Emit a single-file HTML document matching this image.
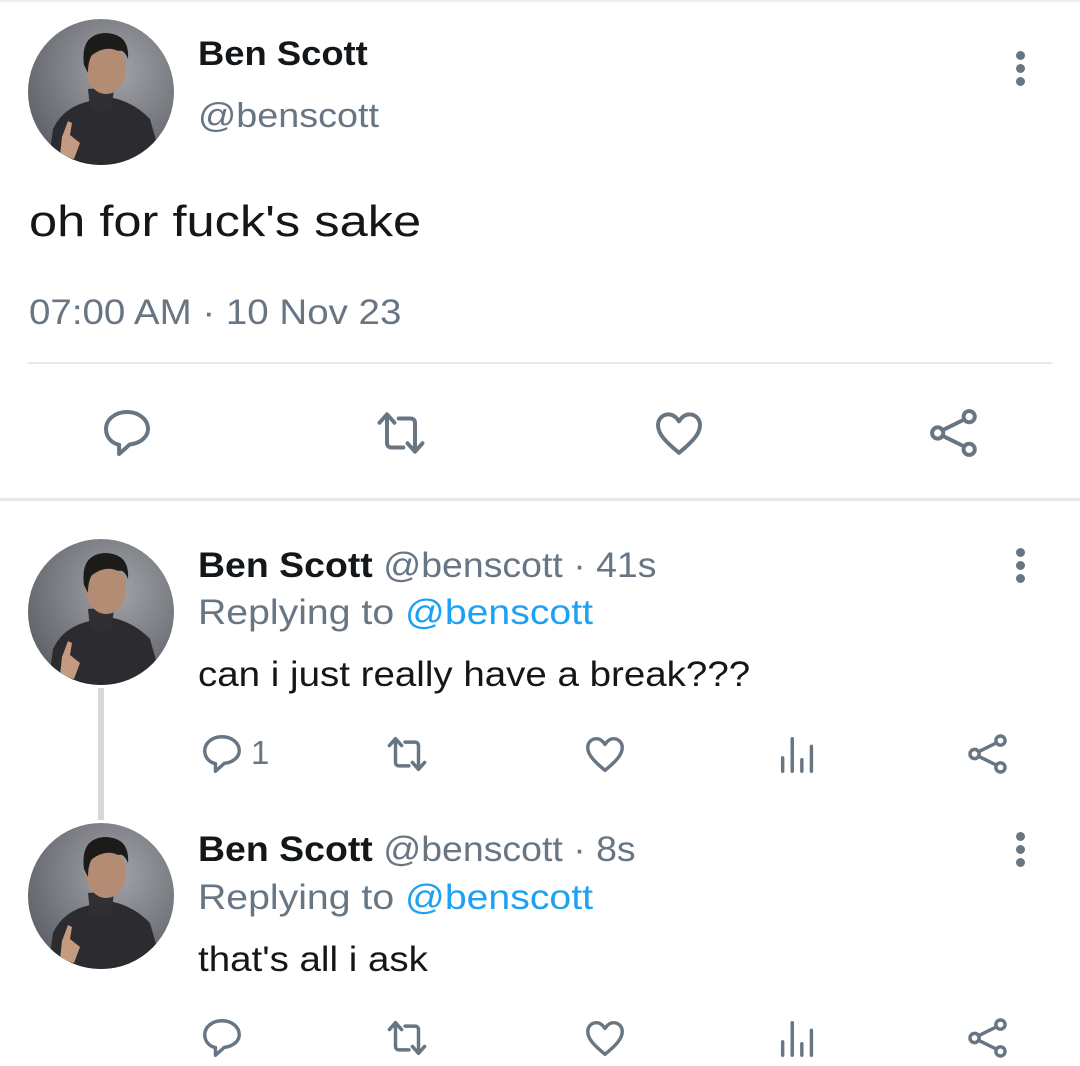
<!DOCTYPE html>
<html><head><meta charset="utf-8"><style>
html,body{margin:0;padding:0;background:#fff;}
body{width:1080px;height:1066px;position:relative;overflow:hidden;font-family:"Liberation Sans",Arial,sans-serif;}
.t{position:absolute;white-space:nowrap;line-height:1;transform-origin:0 0;}
.b{font-weight:bold;color:#14171a;}
.g{color:#687684;}
.k{color:#14171a;}
.bl{color:#1da1f2;}
.av{position:absolute;}
.ic{position:absolute;fill:none;stroke:#687684;stroke-linecap:round;stroke-linejoin:round;}
.dots{position:absolute;width:10px;}
.dots i{display:block;width:9px;height:9px;border-radius:50%;background:#687684;margin-bottom:4px;}
</style></head><body>
<svg width="0" height="0" style="position:absolute">
<defs>
<clipPath id="cc"><circle cx="73" cy="73" r="73"/></clipPath>
<radialGradient id="bg" cx="0.6" cy="0.35" r="0.8"><stop offset="0" stop-color="#a2a4aa"/><stop offset="1" stop-color="#55575e"/></radialGradient>
<symbol id="avatar" viewBox="0 0 146 146">
<g clip-path="url(#cc)">
<rect width="146" height="146" fill="url(#bg)"/>
<path d="M20 146 L25 110 Q35 88 62 82 L80 78 Q105 82 122 100 L135 146Z" fill="#2b2b30"/>
<path d="M60 70 L62 90 Q72 96 84 88 L86 68Z" fill="#2f2f34"/>
<ellipse cx="78" cy="50" rx="20" ry="25" fill="#b48c74"/>
<path d="M56 46 Q52 16 76 14 Q102 14 100 40 Q96 30 90 32 Q78 26 64 36 Q60 42 60 54Z" fill="#1d1a1a"/>
<path d="M34 118 L40 102 L44 104 L42 116 L52 124 L46 140 L32 136Z" fill="#c49a80"/>
</g>
</symbol>
<symbol id="cm" viewBox="0 0 24 24"><path d="M12 3C6.8 3 3 6.3 3 10.3c0 3.6 2.6 6.2 5.6 6.7V21l4.6-4.1c4.6-.5 7.8-3.3 7.8-6.6C21 6.3 17.2 3 12 3z"/></symbol>
<symbol id="rt" viewBox="0 0 24 24"><path d="M6 4L2.8 7.6M6 4l3.2 3.6M6 4v12.3c0 1.2.7 1.9 1.9 1.9H13M11 5.8h5.1c1.2 0 1.9.7 1.9 1.9V20M18 20l-3.2-3.6M18 20l3.2-3.6"/></symbol>
<symbol id="ht" viewBox="0 0 24 24"><path d="M12 20.5C6.5 16 3 12.5 3 8.6 3 6 5 4 7.5 4 9.6 4 11 5.4 12 7c1-1.6 2.4-3 4.5-3C19 4 21 6 21 8.6c0 3.9-3.5 7.4-9 11.9z"/></symbol>
<symbol id="sh" viewBox="0 0 24 24"><circle cx="18.5" cy="5" r="2.4"/><circle cx="5" cy="12" r="2.4"/><circle cx="18.5" cy="19" r="2.4"/><path d="M7.1 10.8l9.3-4.6M7.1 13.2l9.3 4.6"/></symbol>
<symbol id="st" viewBox="0 0 24 24"><path d="M4 14v7M9 4v17M14 15v6M19 8v13"/></symbol>
</defs></svg>

<div style="position:absolute;left:0;top:0;width:1080px;height:2px;background:#eceef0"></div>

<!-- main tweet -->
<svg class="av" style="left:28px;top:19px" width="146" height="146"><use href="#avatar"/></svg>
<div class="t b" style="left:198px;top:37px;font-size:34px;transform:scaleX(1.07)">Ben Scott</div>
<div class="t g" style="left:198px;top:99px;font-size:34px;transform:scaleX(1.11)">@benscott</div>
<div class="dots" style="left:1016px;top:51px"><i></i><i></i><i></i></div>
<div class="t k" style="left:29px;top:200px;font-size:44px;transform:scaleX(1.15)">oh for fuck's sake</div>
<div class="t g" style="left:29px;top:295px;font-size:35px;transform:scaleX(1.1)">07:00 AM · 10 Nov 23</div>
<div style="position:absolute;left:28px;top:362px;width:1024px;height:2px;background:#e6e8ea"></div>

<svg class="ic" style="left:99px;top:404px" width="56" height="58" viewBox="0 0 24 24" stroke-width="1.7"><use href="#cm"/></svg>
<svg class="ic" style="left:373px;top:404px" width="56" height="58" viewBox="0 0 24 24" stroke-width="1.7"><use href="#rt"/></svg>
<svg class="ic" style="left:651px;top:404px" width="56" height="58" viewBox="0 0 24 24" stroke-width="1.7"><use href="#ht"/></svg>
<svg class="ic" style="left:926px;top:404px" width="56" height="58" viewBox="0 0 24 24" stroke-width="1.7"><use href="#sh"/></svg>

<div style="position:absolute;left:0;top:498px;width:1080px;height:3px;background:#e6e8ea"></div>

<!-- reply 1 -->
<svg class="av" style="left:28px;top:539px" width="146" height="146"><use href="#avatar"/></svg>
<div style="position:absolute;left:98px;top:688px;width:6px;height:132px;background:#d6d9dc"></div>
<div class="t" style="left:198px;top:548px;font-size:35px;transform:scaleX(1.07)"><span class="b">Ben Scott</span> <span class="g">@benscott · 41s</span></div>
<div class="t" style="left:198px;top:595px;font-size:35px;transform:scaleX(1.12)"><span class="g">Replying to</span> <span class="bl">@benscott</span></div>
<div class="t k" style="left:198px;top:657px;font-size:35px;transform:scaleX(1.1)">can i just really have a break???</div>
<div class="dots" style="left:1016px;top:548px"><i></i><i></i><i></i></div>

<svg class="ic" style="left:199px;top:731px" width="46" height="46" viewBox="0 0 24 24" stroke-width="1.8"><use href="#cm"/></svg>
<div class="t g" style="left:251px;top:736px;font-size:33px">1</div>
<svg class="ic" style="left:384px;top:731px" width="46" height="46" viewBox="0 0 24 24" stroke-width="1.8"><use href="#rt"/></svg>
<svg class="ic" style="left:582px;top:731px" width="46" height="46" viewBox="0 0 24 24" stroke-width="1.8"><use href="#ht"/></svg>
<svg class="ic" style="left:775px;top:731px" width="46" height="46" viewBox="0 0 24 24" stroke-width="1.8" stroke-linecap="butt"><use href="#st"/></svg>
<svg class="ic" style="left:965px;top:731px" width="46" height="46" viewBox="0 0 24 24" stroke-width="1.8"><use href="#sh"/></svg>

<!-- reply 2 -->
<svg class="av" style="left:28px;top:823px" width="146" height="146"><use href="#avatar"/></svg>
<div class="t" style="left:198px;top:832px;font-size:35px;transform:scaleX(1.07)"><span class="b">Ben Scott</span> <span class="g">@benscott · 8s</span></div>
<div class="t" style="left:198px;top:880px;font-size:35px;transform:scaleX(1.12)"><span class="g">Replying to</span> <span class="bl">@benscott</span></div>
<div class="t k" style="left:198px;top:942px;font-size:35px;transform:scaleX(1.1)">that's all i ask</div>
<div class="dots" style="left:1016px;top:832px"><i></i><i></i><i></i></div>

<svg class="ic" style="left:199px;top:1015px" width="46" height="46" viewBox="0 0 24 24" stroke-width="1.8"><use href="#cm"/></svg>
<svg class="ic" style="left:384px;top:1015px" width="46" height="46" viewBox="0 0 24 24" stroke-width="1.8"><use href="#rt"/></svg>
<svg class="ic" style="left:582px;top:1015px" width="46" height="46" viewBox="0 0 24 24" stroke-width="1.8"><use href="#ht"/></svg>
<svg class="ic" style="left:775px;top:1015px" width="46" height="46" viewBox="0 0 24 24" stroke-width="1.8" stroke-linecap="butt"><use href="#st"/></svg>
<svg class="ic" style="left:965px;top:1015px" width="46" height="46" viewBox="0 0 24 24" stroke-width="1.8"><use href="#sh"/></svg>
</body></html>
